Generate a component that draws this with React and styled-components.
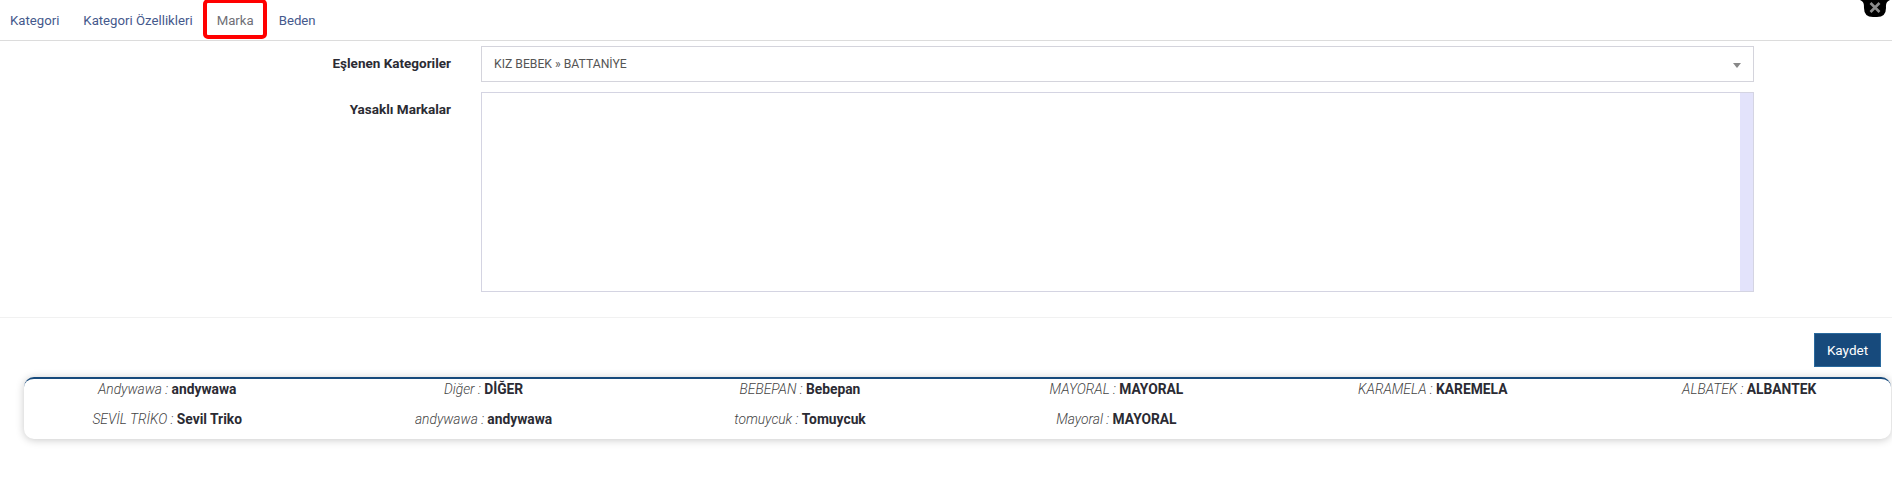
import React from 'react';
import styled, { createGlobalStyle } from 'styled-components';

const GlobalStyle = createGlobalStyle`
  body {
    margin: 0;
    background: #fff;
    font-family: "Roboto", "Liberation Sans", sans-serif;
    color: #2b2b33;
  }
`;

const Page = styled.div`
  position: relative;
  width: 1892px;
  height: 483px;
  overflow: hidden;
`;
const CloseButton = styled.button`
  position: absolute;
  top: 0;
  right: 2px;
  width: 30px;
  height: 18px;
  padding: 0;
  border: none;
  background: none;
  display: block;
  & svg {
    display: block;
  }
`;
const Tabs = styled.nav`
  height: 41px;
  box-sizing: border-box;
  border-bottom: 1px solid #dcdcdc;
  display: flex;
  padding-left: 10px;
  gap: 24px;
`;
const Tab = styled.a`
  font-size: 13.2px;
  line-height: 39px;
  padding-top: 1px;
  color: ${(p) => (p.$active ? '#6f6f76' : '#45598c')};
  position: relative;
  ${(p) => p.$active && `
    margin-right: 1px;
    &::after {
      content: '';
      position: absolute;
      top: -1px;
      bottom: 1px;
      left: -14px;
      right: -13px;
      border: 4px solid #f00;
      border-radius: 5px;
    }
  `}
`;
const Form = styled.form`
  display: grid;
  grid-template-columns: 451px 1273px;
  column-gap: 30px;
  row-gap: 10px;
  padding-top: 5px;
`;
const Label = styled.label`
  font-size: 13.5px;
  font-weight: 700;
  text-align: right;
  line-height: 20px;
  padding-top: 7px;
`;
const SelectBox = styled.div`
  height: 36px;
  box-sizing: border-box;
  border: 1px solid #d4d4dc;
  padding: 0 12px;
  display: flex;
  align-items: center;
  justify-content: space-between;
  font-size: 12.2px;
  color: #555;
`;
const Caret = styled.span`
  width: 0;
  height: 0;
  border-left: 4px solid transparent;
  border-right: 4px solid transparent;
  border-top: 5px solid #888;
  margin-top: 3px;
`;
const AreaField = styled.div`
  height: 200px;
  box-sizing: border-box;
  border: 1px solid #d4d4e2;
  display: flex;
`;
const TextArea = styled.textarea`
  flex: 1;
  margin: 0;
  padding: 0;
  border: none;
  outline: none;
  resize: none;
`;
const ScrollTrack = styled.div`
  width: 13px;
  background: #e3e3fb;
`;
const Divider = styled.hr`
  margin: 25px 0 0;
  border: none;
  border-top: 1px solid #f1f1f1;
`;
const Actions = styled.div`
  display: flex;
  justify-content: flex-end;
  padding: 15px 11px 0 0;
`;
const SaveButton = styled.button`
  width: 67px;
  height: 34px;
  box-sizing: border-box;
  border: 1px solid #2a6a9e;
  background: #174a7c;
  color: #fff;
  font-family: inherit;
  font-size: 13.5px;
  padding: 0;
`;
const Card = styled.section`
  margin: 10px 1px 0 24px;
  height: 62px;
  box-sizing: border-box;
  background: #fff;
  border-top: 2px solid #174a7c;
  border-radius: 10px;
  box-shadow: 0 1px 8px rgba(0, 0, 0, 0.22);
`;
const MappingGrid = styled.div`
  margin-left: -15px;
  display: grid;
  grid-template-columns: repeat(6, 316.4px);
  grid-auto-rows: 30px;
`;
const Mapping = styled.div`
  font-size: 13.8px;
  line-height: 20px;
  text-align: center;
  white-space: nowrap;
  & i {
    font-weight: 300;
    color: #444;
  }
  & b {
    font-weight: 700;
  }
`;

const mappings = [
  ['Andywawa', 'andywawa'],
  ['Diğer', 'DİĞER'],
  ['BEBEPAN', 'Bebepan'],
  ['MAYORAL', 'MAYORAL'],
  ['KARAMELA', 'KAREMELA'],
  ['ALBATEK', 'ALBANTEK'],
  ['SEVİL TRİKO', 'Sevil Triko'],
  ['andywawa', 'andywawa'],
  ['tomuycuk', 'Tomuycuk'],
  ['Mayoral', 'MAYORAL'],
];

const App = () => {
  return (
    <Page>
      <GlobalStyle />
      <CloseButton type="button">
        <svg width="30" height="18" viewBox="0 0 30 18">
          <path d="M0 0 H30 C26 2 26 4 26 8 Q26 17 17 17 H13 Q4 17 4 8 C4 4 4 2 0 0 Z" fill="#000" />
          <path d="M10.5 3 L19.5 12 M19.5 3 L10.5 12" stroke="#8c8c8c" strokeWidth="2.6" />
        </svg>
      </CloseButton>
      <Tabs>
        <Tab>Kategori</Tab>
        <Tab>Kategori Özellikleri</Tab>
        <Tab $active>Marka</Tab>
        <Tab>Beden</Tab>
      </Tabs>
      <Form>
        <Label>Eşlenen Kategoriler</Label>
        <SelectBox>
          KIZ BEBEK » BATTANİYE
          <Caret />
        </SelectBox>
        <Label>Yasaklı Markalar</Label>
        <AreaField>
          <TextArea />
          <ScrollTrack />
        </AreaField>
      </Form>
      <Divider />
      <Actions>
        <SaveButton type="button">Kaydet</SaveButton>
      </Actions>
      <Card>
        <MappingGrid>
          {mappings.map(([from, to], i) => (
            <Mapping key={i}>
              <i>{from} : </i>
              <b>{to}</b>
            </Mapping>
          ))}
        </MappingGrid>
      </Card>
    </Page>
  );
};

export default App;
